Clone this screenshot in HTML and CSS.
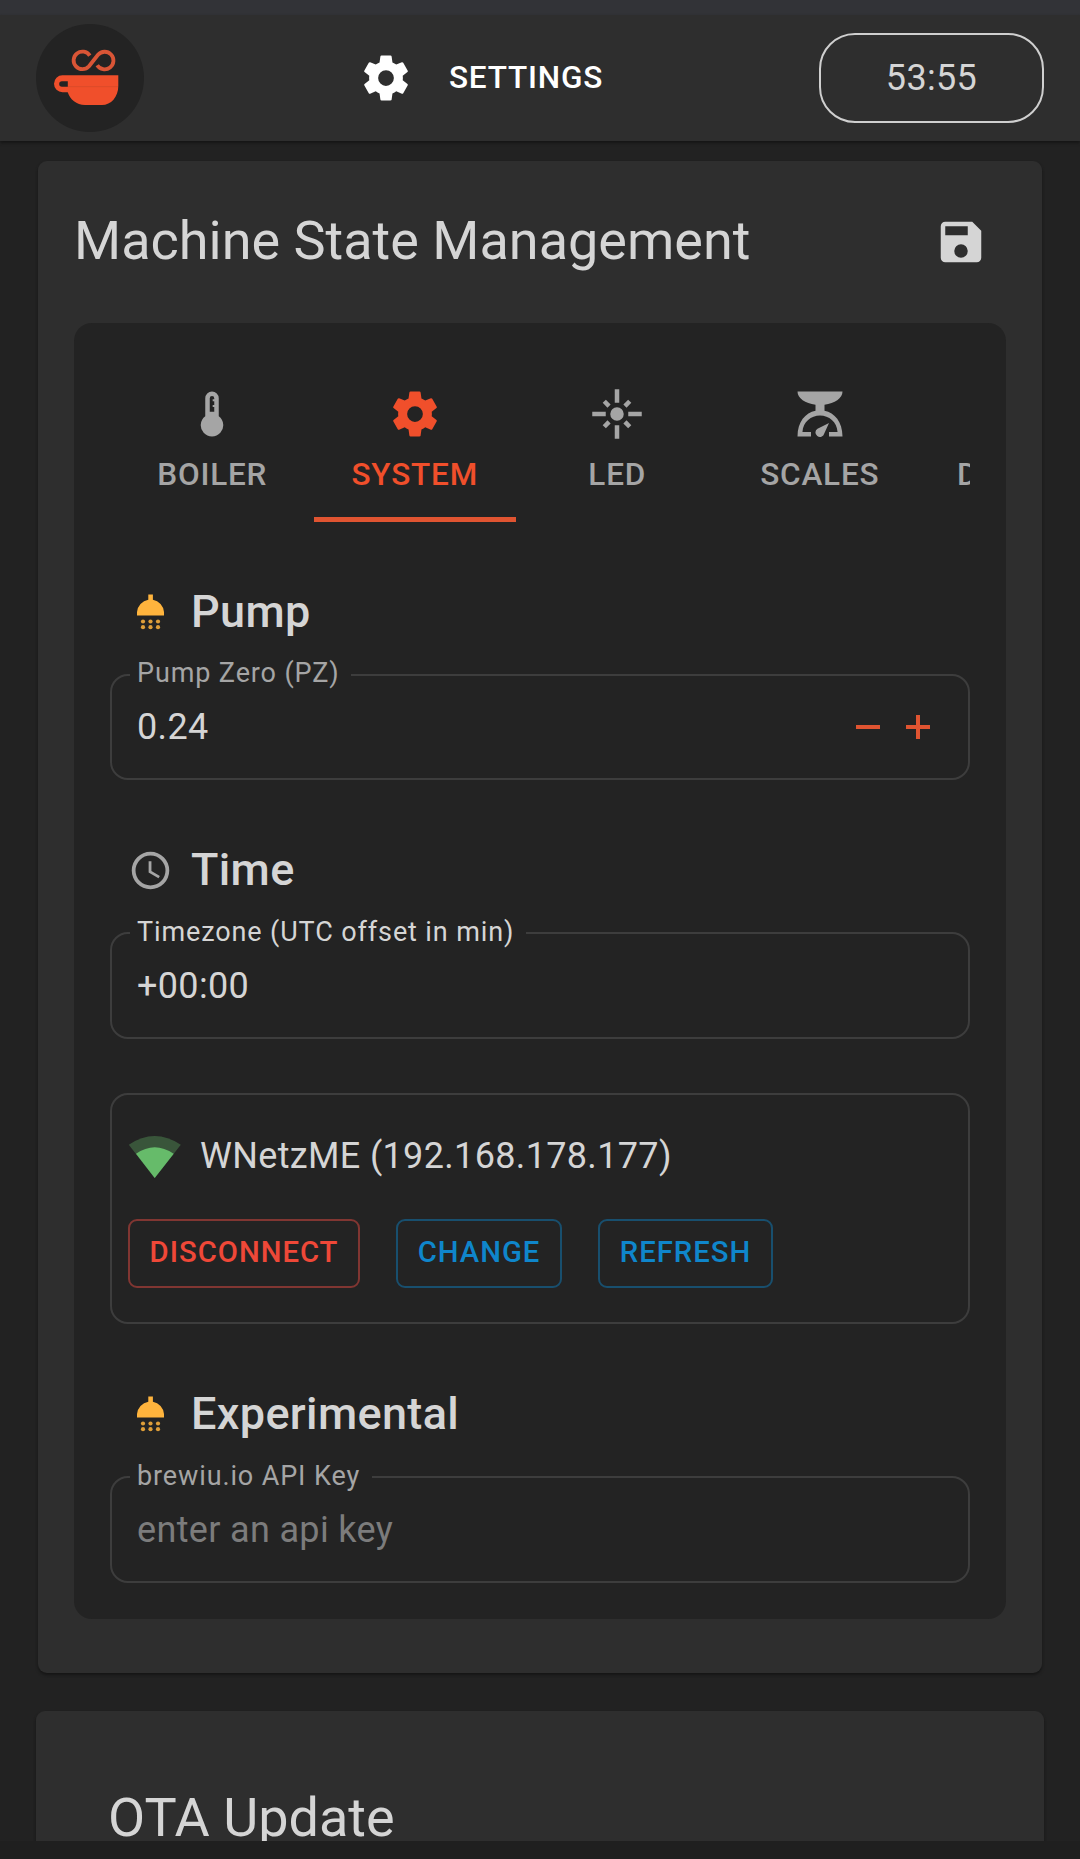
FILE: index.html
```html
<!DOCTYPE html>
<html lang="en">
<head>
<meta charset="utf-8">
<title>Settings</title>
<link rel="stylesheet" href="styles.css">
</head>
<body>
<svg class="symbols" aria-hidden="true">
  <symbol id="cog" viewBox="0 0 24 24"><path d="M12,15.5A3.5,3.5 0 0,1 8.5,12A3.5,3.5 0 0,1 12,8.5A3.5,3.5 0 0,1 15.5,12A3.5,3.5 0 0,1 12,15.5M19.43,12.97C19.47,12.65 19.5,12.33 19.5,12C19.5,11.67 19.47,11.34 19.43,11L21.54,9.37C21.73,9.22 21.78,8.95 21.66,8.73L19.66,5.27C19.54,5.05 19.27,4.96 19.05,5.05L16.56,6.05C16.04,5.66 15.5,5.32 14.87,5.07L14.5,2.42C14.46,2.18 14.25,2 14,2H10C9.75,2 9.54,2.18 9.5,2.42L9.13,5.07C8.5,5.32 7.96,5.66 7.44,6.05L4.95,5.05C4.73,4.96 4.46,5.05 4.34,5.27L2.34,8.73C2.21,8.95 2.27,9.22 2.46,9.37L4.57,11C4.53,11.34 4.5,11.67 4.5,12C4.5,12.33 4.53,12.65 4.57,12.97L2.46,14.63C2.27,14.78 2.21,15.05 2.34,15.27L4.34,18.73C4.46,18.95 4.73,19.03 4.95,18.95L7.44,17.94C7.96,18.34 8.5,18.68 9.13,18.93L9.5,21.58C9.54,21.82 9.75,22 10,22H14C14.25,22 14.46,21.82 14.5,21.58L14.87,18.93C15.5,18.67 16.04,18.34 16.56,17.94L19.05,18.95C19.27,19.03 19.54,18.95 19.66,18.73L21.66,15.27C21.78,15.05 21.73,14.78 21.54,14.63L19.43,12.97Z"/></symbol>
  <symbol id="shower" viewBox="0 0 45 45"><path d="M20.3 4.5h4.6v5.2A13.5 13.5 0 0 1 36 22v3.5H9V22A13.5 13.5 0 0 1 20.3 9.7z"/><g opacity=".85"><circle cx="15" cy="31.5" r="2.1"/><circle cx="22.5" cy="31.5" r="2.1"/><circle cx="30" cy="31.5" r="2.1"/><circle cx="15" cy="37.2" r="2.1"/><circle cx="22.5" cy="37.2" r="2.1"/><circle cx="30" cy="37.2" r="2.1"/></g></symbol>
</svg>
<div class="status-strip"></div>
<header class="app-bar">
  <div class="logo">
    <svg viewBox="0 0 108 108">
      <path d="M53.8 31.6A8.8 8.8 0 1 0 53 42.2L62 30.8A8.8 8.8 0 1 1 61.2 41.2" fill="none" stroke="#d95536" stroke-width="3.8"/>
      <path d="M26.5 51.3H82.3V62C82.3 73 75 81 66 81H49C40.5 81 34 75.5 31.7 68.3H26.5A8.5 8.5 0 0 1 26.5 51.3ZM26 57.2A2.8 2.8 0 0 0 26 62.8H31.8V57.2Z" fill="#f04f2b" fill-rule="evenodd"/>
      <path d="M32 62.7H82" stroke="#dc4a29" stroke-width="1"/>
    </svg>
  </div>
  <div class="page-title"><svg class="icon"><use href="#cog"/></svg><span>SETTINGS</span></div>
  <div class="timer">53:55</div>
</header>
<main class="content">
  <section class="card">
    <div class="card-head">
      <h1 class="card-title">Machine State Management</h1>
      <svg class="icon save" viewBox="0 0 24 24"><path d="M15,9H5V5H15M12,19A3,3 0 0,1 9,16A3,3 0 0,1 12,13A3,3 0 0,1 15,16A3,3 0 0,1 12,19M17,3H5C3.89,3 3,3.9 3,5V19A2,2 0 0,0 5,21H19A2,2 0 0,0 21,19V7L17,3Z"/></svg>
    </div>
    <div class="panel">
      <nav class="tabs">
        <div class="tab"><svg class="icon" viewBox="0 0 24 24"><path fill-rule="evenodd" d="M15,13V5A3,3 0 0,0 9,5V13A5,5 0 1,0 15,13ZM11 11V5A1 1 0 0 1 13 5V5.4H12.3V6.3H13V8H12.3V8.9H13V11Z"/></svg><span>BOILER</span></div>
        <div class="tab active"><svg class="icon"><use href="#cog"/></svg><span>SYSTEM</span></div>
        <div class="tab"><svg class="icon" viewBox="0 0 24 24"><path d="M7,11H1V13H7V11M9.17,7.76L7.05,5.64L5.64,7.05L7.76,9.17L9.17,7.76M13,1H11V7H13V1M18.36,7.05L16.95,5.64L14.83,7.76L16.24,9.17L18.36,7.05M17,11V13H23V11H17M12,9A3,3 0 0,0 9,12A3,3 0 0,0 12,15A3,3 0 0,0 15,12A3,3 0 0,0 12,9M14.83,16.24L16.95,18.36L18.36,16.95L16.24,14.83L14.83,16.24M5.64,16.95L7.05,18.36L9.17,16.24L7.76,14.83L5.64,16.95M11,23H13V17H11V23Z"/></svg><span>LED</span></div>
        <div class="tab"><svg class="icon" viewBox="0 0 24 24"><path d="M8 22H2C2 15.500 5.500 11.500 10 10.600V7.900C5.500 7.300 2 5 2 2H22C22 5 18.500 7.300 14 7.900V10.600C18.500 11.500 22 15.500 22 22H16V20H19.800C19.500 15.500 16 12.700 12 12.700S4.500 15.500 4.200 20H8ZM16 16L13.900 20.700A2 2 0 1 1 10.900 18.500Z"/></svg><span>SCALES</span></div>
        <div class="tab partial"><span>D</span></div>
      </nav>

      <h2 class="section-title"><svg class="section-icon amber"><use href="#shower"/></svg><span>Pump</span></h2>
      <div class="field pump">
        <label class="label">Pump Zero (PZ)</label>
        <span class="value">0.24</span>
        <div class="stepper">
          <svg viewBox="0 0 24 24"><path d="M0 10h24v4H0z"/></svg>
          <svg viewBox="0 0 24 24"><path d="M10 0h4v10h10v4H14v10h-4V14H0v-4h10z"/></svg>
        </div>
      </div>

      <h2 class="section-title"><svg class="section-icon grey" viewBox="0 0 24 24"><path d="M12,20A8,8 0 0,0 20,12A8,8 0 0,0 12,4A8,8 0 0,0 4,12A8,8 0 0,0 12,20M12,2A10,10 0 0,1 22,12A10,10 0 0,1 12,22C6.47,22 2,17.5 2,12A10,10 0 0,1 12,2M12.5,7V12.25L17,14.92L16.25,16.15L11,13V7H12.5Z"/></svg><span>Time</span></h2>
      <div class="field">
        <label class="label light">Timezone (UTC offset in min)</label>
        <span class="value">+00:00</span>
      </div>

      <div class="network">
        <div class="network-name">
          <svg viewBox="0 0 54 42"><path d="M.8 8.8Q26.5 -8.7 52.8 8.800L26.700 42Z" opacity=".33"/><path d="M8 17.700Q26.700 4.700 45.700 17.700L26.700 42Z"/></svg>
          <span>WNetzME (192.168.178.177)</span>
        </div>
        <div class="actions">
          <button class="btn danger">DISCONNECT</button>
          <button class="btn change">CHANGE</button>
          <button class="btn refresh">REFRESH</button>
        </div>
      </div>

      <h2 class="section-title"><svg class="section-icon amber"><use href="#shower"/></svg><span>Experimental</span></h2>
      <div class="field">
        <label class="label api">brewiu.io API Key</label>
        <span class="value placeholder">enter an api key</span>
      </div>
    </div>
  </section>
  <section class="card update"><h1 class="card-title">OTA Update</h1></section>
</main>
<footer class="bottom-bar"></footer>
</body>
</html>
```
FILE: styles.css
```css
* { box-sizing: border-box; }
body {
  margin: 0;
  height: 1859px;
  display: flex;
  flex-direction: column;
  overflow: hidden;
  background: #222;
  color: #d5d5d5;
  font-family: Roboto, "Liberation Sans", sans-serif;
}
svg { display: block; fill: currentColor; flex: none; }
.symbols { position: absolute; width: 0; height: 0; }
.icon { width: 54px; height: 54px; }
h1, h2 { margin: 0; }

.status-strip { height: 15px; flex: none; background: #323337; }
.app-bar {
  height: 126px;
  flex: none;
  padding: 0 36px;
  display: grid;
  grid-template-columns: 225px 1fr 225px;
  align-items: center;
  background: #2e2e2e;
  box-shadow: 0 2px 3px #151515;
  z-index: 1;
}
.logo { width: 108px; height: 108px; border-radius: 50%; background: #232323; }
.page-title {
  display: flex;
  align-items: center;
  padding-left: 98px;
  gap: 36px;
  color: #fff;
  font-size: 31.5px;
  font-weight: 500;
  letter-spacing: .8px;
}
.page-title span { padding-bottom: 2px; }
.timer {
  height: 90px;
  border: 2px solid #cfcfcf;
  border-radius: 36px;
  font-size: 36px;
  line-height: 86px;
  letter-spacing: .34px;
  text-align: center;
}

.content { flex: 1; min-height: 0; overflow: hidden; padding: 20px 36px 0; }
.card { background: #2e2e2e; border-radius: 9px; box-shadow: 0 2px 3px #151515; }
.card:first-child { height: 1512px; margin: 0 2px 38px; padding: 0 36px; }
.card-head {
  height: 162px;
  display: flex;
  justify-content: space-between;
  align-items: center;
  padding-right: 18px;
}
.card-title { font-size: 54px; line-height: 72px; font-weight: 400; }
.card-head .card-title { margin-top: -2px; }
.update { padding: 71px 72px 0; height: 200px; }

.panel { height: 1296px; padding: 37px 36px 0; border-radius: 18px; background: #232323; }
.tabs { height: 162px; padding-left: 1px; display: flex; overflow: hidden; color: #a5a5a5; }
.tab {
  flex: 0 0 202.5px;
  display: flex;
  flex-direction: column;
  align-items: center;
  padding-top: 27px;
  gap: 14px;
  border-bottom: 5px solid transparent;
  font-size: 31.5px;
  line-height: 40px;
  font-weight: 500;
  letter-spacing: .8px;
}
.tab.active { color: #f04f2b; border-color: #e05431; }
.tab.partial { align-items: flex-start; padding: 95px 0 0 36px; }

.section-title {
  height: 46px;
  margin: 67px 0 39px;
  padding-left: 18px;
  display: flex;
  align-items: center;
  gap: 18px;
  font-size: 45px;
  line-height: 46px;
  font-weight: 500;
  letter-spacing: .35px;
}
.section-icon { width: 45px; height: 45px; }
.amber { color: #ffb43d; }
.grey { color: #a5a5a5; }

.field {
  position: relative;
  height: 107px;
  display: flex;
  justify-content: space-between;
  padding: 0 38px 0 25px;
  border: 2px solid #3d3d3d;
  border-radius: 18px;
}
.label {
  position: absolute;
  left: 18px;
  top: -18px;
  padding: 0 12px 0 7px;
  background: #232323;
  color: #a5a5a5;
  font-size: 27px;
  line-height: 32px;
  letter-spacing: .88px;
  white-space: nowrap;
}
.label.light { color: #d5d5d5; }
.value { font-size: 36px; line-height: 104px; letter-spacing: .34px; }
.placeholder { color: #7c7c7c; }
.field.pump { height: 106px; }
.pump .label { top: -19px; }
.pump .value { line-height: 102px; }
.stepper { display: flex; gap: 26px; padding-top: 39px; color: #e05431; }
.stepper svg { width: 24px; height: 24px; }

.network { height: 231px; margin-top: 54px; padding: 41px 16px 0; border: 2px solid #3d3d3d; border-radius: 18px; }
.network-name { display: flex; align-items: center; height: 42px; gap: 18px; font-size: 36px; letter-spacing: .34px; }
.network-name span { padding-bottom: 2px; }
.network-name svg { width: 54px; height: 42px; color: #66bb6a; }
.actions { display: flex; gap: 36px; margin-top: 41px; }
.btn {
  width: 232px;
  height: 69px;
  padding: 0 0 3px;
  background: none;
  border: 2px solid #184f6e;
  border-radius: 9px;
  color: #0f86cb;
  font: 500 29.25px/40px Roboto, "Liberation Sans", sans-serif;
  letter-spacing: 1px;
}
.btn.danger { color: #ef4838; border-color: #813632; }
.btn.change { width: 166px; }
.btn.refresh { width: 175px; }

.bottom-bar { height: 18px; flex: none; background: #1f1f1f; }
```
